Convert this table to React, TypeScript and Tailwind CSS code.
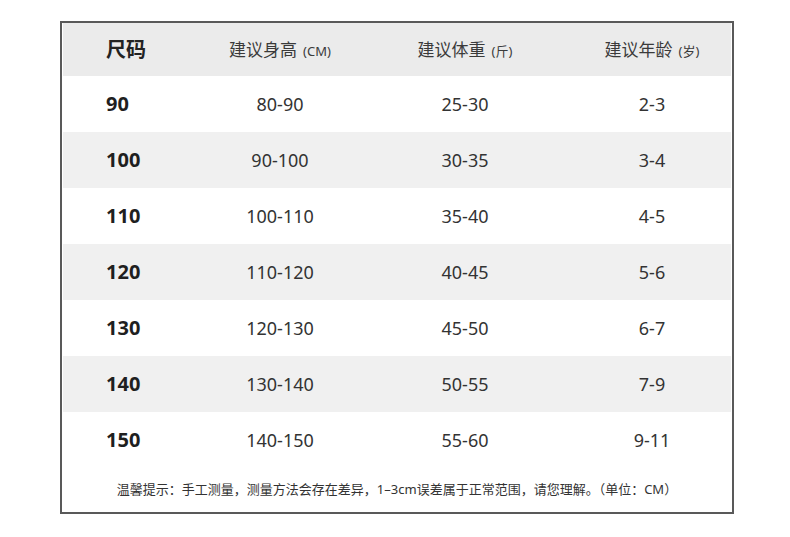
const rows = [
  ["90", "80-90", "25-30", "2-3"],
  ["100", "90-100", "30-35", "3-4"],
  ["110", "100-110", "35-40", "4-5"],
  ["120", "110-120", "40-45", "5-6"],
  ["130", "120-130", "45-50", "6-7"],
  ["140", "130-140", "50-55", "7-9"],
  ["150", "140-150", "55-60", "9-11"],
];

const font = "font-['Noto_Sans','Noto_Sans_CJK_SC',sans-serif]";
const cols = "grid grid-cols-[130px_174px_196px_1fr] items-center";

export default function App() {
  return (
    <div className={`w-[790px] h-[537px] bg-white pt-[21px] pl-[60px] ${font}`}>
      <div className="w-[674px] h-[493px] border-2 border-[#595959] px-px flex flex-col">
        {/* Header */}
        <div className={`${cols} h-[53px] bg-[#ebebeb] text-[#3a3a3a]`}>
          <div className="pl-[43px] text-[20px] font-bold text-[#222]">尺码</div>
          <div className="text-center text-[17px]">
            建议身高<span className="text-[13px] ml-1.5">(CM)</span>
          </div>
          <div className="text-center text-[17px]">
            建议体重<span className="text-[13px] ml-1.5">(斤)</span>
          </div>
          <div className="text-center text-[17px] pl-[10px]">
            建议年龄<span className="text-[13px] ml-1.5">(岁)</span>
          </div>
        </div>

        {/* Rows */}
        {rows.map((r, i) => (
          <div
            key={r[0]}
            className={`${cols} h-[56px] ${i % 2 === 1 ? "bg-[#f0f0f0]" : "bg-white"}`}
          >
            <div className="pl-[43px] text-[20px] font-bold text-[#1f1f1f]">{r[0]}</div>
            <div className="text-center text-[18px] text-[#333]">{r[1]}</div>
            <div className="text-center text-[18px] text-[#333]">{r[2]}</div>
            <div className="text-center text-[18px] text-[#333] pl-[10px]">{r[3]}</div>
          </div>
        ))}

        {/* Note */}
        <div className="flex-1 flex items-center justify-center pb-px text-[13px] text-[#333]">
          温馨提示：手工测量，测量方法会存在差异，1–3cm误差属于正常范围，请您理解。（单位：CM）
        </div>
      </div>
    </div>
  );
}
